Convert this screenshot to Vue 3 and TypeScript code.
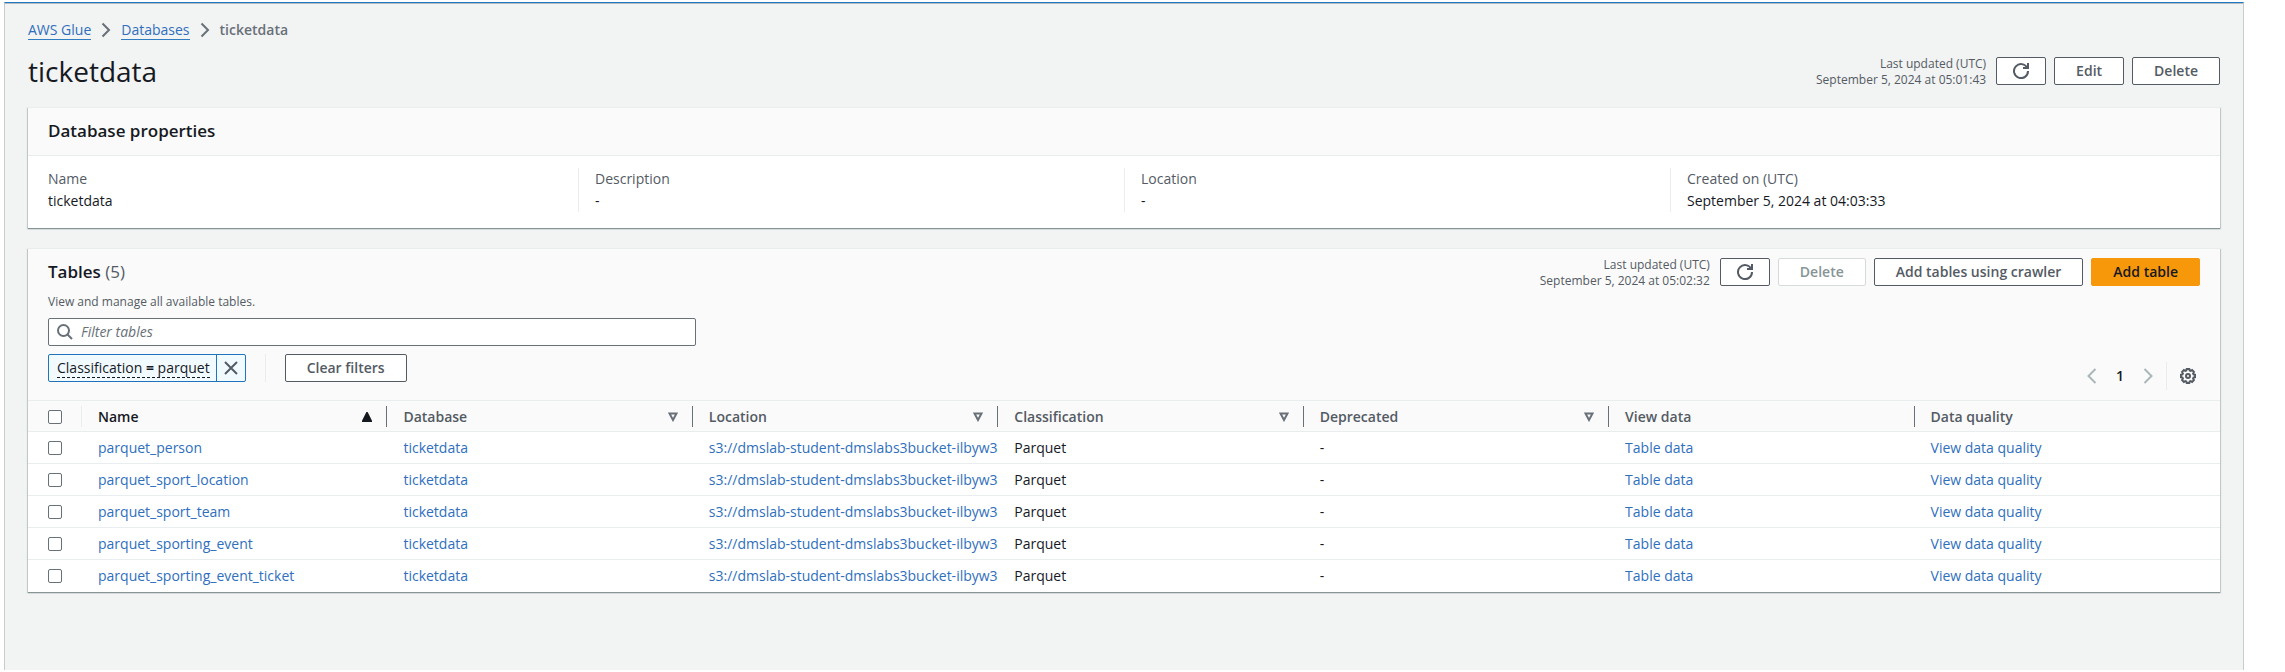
<script setup lang="ts">
import { ref } from 'vue'

interface Column {
  label: string
  sort: 'asc' | 'none' | null
}

const columns: Column[] = [
  { label: 'Name', sort: 'asc' },
  { label: 'Database', sort: 'none' },
  { label: 'Location', sort: 'none' },
  { label: 'Classification', sort: 'none' },
  { label: 'Deprecated', sort: 'none' },
  { label: 'View data', sort: null },
  { label: 'Data quality', sort: null }
]

const tables: string[] = [
  'parquet_person',
  'parquet_sport_location',
  'parquet_sport_team',
  'parquet_sporting_event',
  'parquet_sporting_event_ticket'
]

const location = 's3://dmslab-student-dmslabs3bucket-ilbyw3p'

const properties = [
  { label: 'Name', value: 'ticketdata' },
  { label: 'Description', value: '-' },
  { label: 'Location', value: '-' },
  { label: 'Created on (UTC)', value: 'September 5, 2024 at 04:03:33' }
]

const filter = ref('')
const selected = ref<string[]>([])

function toggleAll(event: Event) {
  selected.value = (event.target as HTMLInputElement).checked ? [...tables] : []
}
</script>

<template>
  <main class="page">
    <nav class="breadcrumbs" aria-label="Breadcrumbs">
      <a href="#glue">AWS Glue</a>
      <svg class="crumb-sep" viewBox="0 0 10 16"><path d="M1.5 1.5 8 8l-6.500 6.500" /></svg>
      <a href="#databases">Databases</a>
      <svg class="crumb-sep" viewBox="0 0 10 16"><path d="M1.5 1.5 8 8l-6.500 6.500" /></svg>
      <span class="current">ticketdata</span>
    </nav>

    <header class="page-header">
      <h1>ticketdata</h1>
      <div class="actions">
        <p class="updated">Last updated (UTC)<br />September 5, 2024 at 05:01:43</p>
        <button type="button" class="btn icon-btn" aria-label="Refresh database">
          <svg class="icon" viewBox="0 0 16 16">
            <path d="M10 5h5V0" />
            <path d="M15 8a7 7 0 1 1-.7-3" />
          </svg>
        </button>
        <button type="button" class="btn">Edit</button>
        <button type="button" class="btn">Delete</button>
      </div>
    </header>

    <section class="container">
      <h2 class="properties-title">Database properties</h2>
      <dl class="properties">
        <div v-for="p in properties" :key="p.label" class="property">
          <dt>{{ p.label }}</dt>
          <dd>{{ p.value }}</dd>
        </div>
      </dl>
    </section>

    <section class="container tables">
      <div class="tables-header">
        <div class="tables-top">
          <h2>Tables <span class="counter">(5)</span></h2>
          <div class="actions">
            <p class="updated">Last updated (UTC)<br />September 5, 2024 at 05:02:32</p>
            <button type="button" class="btn icon-btn" aria-label="Refresh tables">
              <svg class="icon" viewBox="0 0 16 16">
                <path d="M10 5h5V0" />
                <path d="M15 8a7 7 0 1 1-.7-3" />
              </svg>
            </button>
            <button type="button" class="btn" disabled>Delete</button>
            <button type="button" class="btn">Add tables using crawler</button>
            <button type="button" class="btn primary">Add table</button>
          </div>
        </div>
        <p class="description">View and manage all available tables.</p>

        <div class="toolbar">
          <div class="filters">
            <label class="search">
              <svg class="icon" viewBox="0 0 16 16">
                <circle cx="6.500" cy="6.500" r="5.500" />
                <path d="m10.500 10.500 4.500 4.500" />
              </svg>
              <input v-model="filter" type="text" placeholder="Filter tables" aria-label="Filter tables" />
            </label>
            <div class="filter-row">
              <div class="token">
                <button type="button" class="token-label"><span>Classification <b>=</b> parquet</span></button>
                <button type="button" class="token-close" aria-label="Remove filter">
                  <svg class="icon" viewBox="0 0 16 16"><path d="m2 2 12 12M14 2 2 14" /></svg>
                </button>
              </div>
              <span class="divider"></span>
              <button type="button" class="btn">Clear filters</button>
            </div>
          </div>
          <div class="pager">
            <button type="button" class="plain" aria-label="Previous page" disabled>
              <svg class="chev" viewBox="0 0 10 16"><path d="M8.500 1 1.500 8l7 7" /></svg>
            </button>
            <button type="button" class="plain page-number">1</button>
            <button type="button" class="plain" aria-label="Next page" disabled>
              <svg class="chev" viewBox="0 0 10 16"><path d="m1.500 1 7 7-7 7" /></svg>
            </button>
            <span class="divider"></span>
            <button type="button" class="plain gear" aria-label="Preferences">
              <svg class="icon" viewBox="0 0 16 16">
                <path
                  d="M6.700 1h2.600l.4 1.500 1 .4 1.400-.8 1.800 1.800-.8 1.400.4 1 1.500.4v2.600l-1.500.4-.4 1 .8 1.400-1.800 1.800-1.400-.8-1 .4-.4 1.500H6.700l-.4-1.500-1-.4-1.400.8-1.800-1.800.8-1.400-.4-1L1 9.300V6.700l1.500-.4.4-1-.8-1.400 1.800-1.800 1.400.8 1-.4z"
                />
                <circle cx="8" cy="8" r="2" />
              </svg>
            </button>
          </div>
        </div>
      </div>

      <table>
        <colgroup>
          <col class="col-select" />
          <col v-for="c in columns" :key="c.label" />
        </colgroup>
        <thead>
          <tr>
            <th class="select" scope="col">
              <div class="select-cell">
                <input
                  type="checkbox"
                  aria-label="Select all tables"
                  :checked="selected.length === tables.length"
                  @change="toggleAll"
                />
              </div>
            </th>
            <th v-for="c in columns" :key="c.label" scope="col">
              <div class="head" :class="{ sorted: c.sort === 'asc' }">
                {{ c.label }}
                <svg v-if="c.sort === 'asc'" class="sort up" viewBox="0 0 10 10"><path d="M5 1 9 9H1z" /></svg>
                <svg v-else-if="c.sort" class="sort" viewBox="0 0 10 10"><path d="M1.500 1.500h7L5 8z" /></svg>
              </div>
            </th>
          </tr>
        </thead>
        <tbody>
          <tr v-for="name in tables" :key="name">
            <td class="select">
              <div class="select-cell">
                <input v-model="selected" type="checkbox" :value="name" :aria-label="`Select ${name}`" />
              </div>
            </td>
            <td><a href="#table">{{ name }}</a></td>
            <td><a href="#database">ticketdata</a></td>
            <td><a href="#location">{{ location }}</a></td>
            <td>Parquet</td>
            <td>-</td>
            <td><a href="#data">Table data</a></td>
            <td><a href="#quality">View data quality</a></td>
          </tr>
        </tbody>
      </table>
    </section>
  </main>
</template>

<style>
body {
  background: #fff;
}
</style>

<style scoped>
* {
  box-sizing: border-box;
}

.page {
  margin: 2px 41px 2px 4px;
  min-height: calc(100vh - 4px);
  padding: 16px 23px 24px;
  background: #f2f3f3;
  border: 1px solid #c6cbcd;
  border-top: 1px solid #1f78c1;
  border-bottom: 0;
  box-shadow: inset 0 1px 0 #b4bcc0;
  font: 14px/22px "Open Sans", "Noto Sans", sans-serif;
  color: #16191f;
}

h1,
h2,
p,
dl,
dd {
  margin: 0;
}

a {
  color: #2f6fbd;
  text-decoration: none;
}

button,
input {
  font: inherit;
  margin: 0;
}

.breadcrumbs {
  display: flex;
  align-items: center;
}

.breadcrumbs a {
  line-height: 18px;
  border-bottom: 1px solid #2f7cc0;
}

.crumb-sep {
  width: 10px;
  height: 16px;
  margin: 0 10px;
  fill: none;
  stroke: #687078;
  stroke-width: 2;
}

.current {
  font-weight: 600;
  color: #687078;
}

.page-header {
  display: flex;
  justify-content: space-between;
  align-items: center;
  margin: 12px 0 18px;
}

h1 {
  font-size: 28px;
  line-height: 36px;
  font-weight: 400;
}

h2 {
  font-size: 17px;
  line-height: 28px;
  font-weight: 600;
}

.actions {
  display: flex;
  align-items: center;
  gap: 8px;
}

.updated {
  margin-right: 2px;
  padding-top: 2px;
  font-size: 12px;
  line-height: 16px;
  text-align: right;
  color: #545b64;
}

.btn {
  height: 28px;
  padding: 0 21px;
  border: 1px solid #545b64;
  border-radius: 2px;
  background: #fff;
  color: #545b64;
  font-weight: 600;
  line-height: 22px;
  white-space: nowrap;
}

.btn:disabled {
  border-color: #d5dbdb;
  color: #879596;
}

.btn.primary {
  border-color: #f7980a;
  background: #f7980a;
  color: #16191f;
}

.icon-btn {
  width: 50px;
  padding: 0 16px;
}

.icon {
  display: block;
  width: 16px;
  height: 16px;
  fill: none;
  stroke: #545b64;
  stroke-width: 2;
}

.container {
  background: #fff;
  border-top: 1px solid #eaeded;
  box-shadow:
    0 1px 1px 0 #879596,
    1px 1px 1px 0 rgba(0, 28, 36, 0.15),
    -1px 1px 1px 0 rgba(0, 28, 36, 0.15);
}

.properties-title {
  padding: 9px 20px 10px;
  background: #fafafa;
  border-bottom: 1px solid #eaeded;
}

.properties {
  display: grid;
  grid-template-columns: repeat(4, 1fr);
  gap: 32px;
  padding: 12px 20px 16px;
}

.property + .property {
  margin-left: -16px;
  padding-left: 16px;
  border-left: 1px solid #eaeded;
}

dt {
  color: #545b64;
}

.tables {
  margin-top: 20px;
}

.tables-header {
  padding: 9px 20px 10px;
  background: #fafafa;
}

.tables-top {
  display: flex;
  justify-content: space-between;
  align-items: center;
  height: 28px;
}

.counter {
  font-weight: 400;
  color: #545b64;
}

.description {
  margin: 8px 0;
  font-size: 12px;
  line-height: 16px;
  color: #545b64;
}

.toolbar {
  display: flex;
  justify-content: space-between;
  align-items: flex-end;
}

.filters {
  flex: 0 1 648px;
  padding-bottom: 8px;
}

.search {
  display: flex;
  align-items: center;
  gap: 8px;
  height: 28px;
  padding: 0 8px;
  background: #fff;
  border: 1px solid #687078;
  border-radius: 2px;
}

.search .icon {
  stroke: #687078;
}

.search input {
  flex: 1;
  min-width: 0;
  padding: 0;
  border: 0;
  outline: 0;
  background: transparent;
  color: #16191f;
}

.search input::placeholder {
  color: #687078;
  font-style: italic;
  opacity: 1;
}

.filter-row {
  display: flex;
  align-items: center;
  margin-top: 8px;
}

.token {
  display: flex;
  height: 28px;
  border: 1px solid #2074bd;
  border-radius: 2px;
  background: #f1faff;
}

.token-label,
.token-close,
.plain {
  display: flex;
  align-items: center;
  justify-content: center;
  padding: 0;
  border: 0;
  background: none;
  color: #16191f;
}

.token-label {
  padding: 0 6px 0 8px;
}

.token-label span {
  line-height: 18px;
  border-bottom: 1px dashed #16191f;
}

.token-close {
  width: 29px;
  border-left: 1px solid #2074bd;
}

.divider {
  width: 1px;
  height: 28px;
  background: #eaeded;
}

.filter-row .divider {
  margin: 0 19px;
}

.pager {
  display: flex;
  align-items: center;
  gap: 4px;
}

.plain {
  width: 24px;
  height: 28px;
}

.page-number {
  font-weight: 600;
}

.chev {
  width: 10px;
  height: 16px;
  fill: none;
  stroke: #aab7b8;
  stroke-width: 2;
}

.pager .divider {
  margin: 0 5px 0 2px;
}

table {
  width: 100%;
  table-layout: fixed;
  border-spacing: 0;
}

.col-select {
  width: 54px;
}

th {
  padding: 5px 0 4px;
  background: #fafafa;
  border-top: 1px solid #eaeded;
  border-bottom: 1px solid #eaeded;
  text-align: left;
}

.head,
.select-cell {
  display: flex;
  align-items: center;
  justify-content: space-between;
  height: 21px;
}

.head {
  padding: 0 14px 0 16px;
  border-right: 1px solid #687078;
  font-weight: 600;
  line-height: 20px;
  color: #545b64;
}

th:last-child .head {
  border-right: 0;
}

.head.sorted {
  color: #16191f;
}

.select-cell {
  padding-left: 20px;
}

th .select-cell {
  border-right: 1px solid #eaeded;
}

.sort {
  width: 10px;
  height: 10px;
  fill: none;
  stroke: #687078;
  stroke-width: 2;
}

.sort.up {
  fill: #16191f;
  stroke: #16191f;
}

td {
  height: 32px;
  padding: 0 0 0 16px;
  border-bottom: 1px solid #eaeded;
  overflow: hidden;
  white-space: nowrap;
}

td.select {
  padding: 0;
}

tbody tr:last-child td {
  border-bottom: 0;
}

input[type="checkbox"] {
  appearance: none;
  width: 14px;
  height: 14px;
  border: 1px solid #687078;
  border-radius: 2px;
  background: #fff;
}

input[type="checkbox"]:checked {
  background: #2074bd;
}
</style>
